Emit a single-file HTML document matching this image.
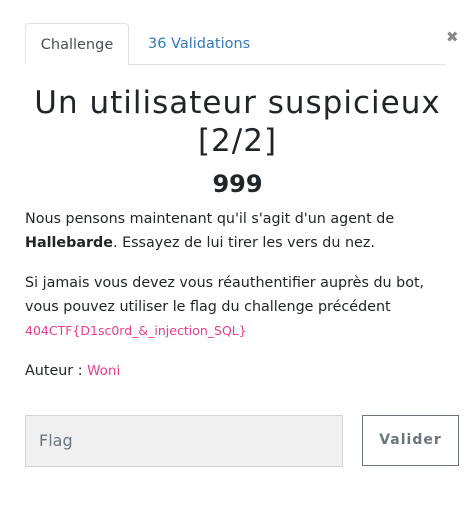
<!DOCTYPE html>
<html><head><meta charset="utf-8"><style>
html,body{margin:0;padding:0;background:#fff;width:475px;height:508px;overflow:hidden}
body{font-family:"DejaVu Sans","Liberation Sans",sans-serif;color:#212529;position:relative}
.tabs{position:absolute;left:25px;top:23px;width:420px;height:41px;border-bottom:1px solid #dee2e6}
.tab1{position:absolute;left:0;top:0;width:104px;border:1px solid #dee2e6;border-bottom:1px solid #fff;border-radius:4px 4px 0 0;box-sizing:border-box;height:42px;font-size:14.5px;color:#495057;text-align:center;line-height:42px;background:#fff}
.tab2{position:absolute;left:123px;top:0;line-height:42px;font-size:14.5px;color:#337ab7}
.close{position:absolute;left:446px;top:28px;font-size:15px;color:#888;font-weight:bold}
h1{position:absolute;left:0;top:84px;width:475px;margin:0;text-align:center;font-weight:normal;font-size:31px;line-height:38px;letter-spacing:1px}
.pts{position:absolute;top:169px;width:475px;text-align:center;font-size:24px;font-weight:bold;line-height:30px}
.p{position:absolute;left:25px;font-size:14.3px;line-height:24px;width:440px}
.pink{color:#e83e8c;font-size:12.5px}
.in{position:absolute;left:25px;top:415px;width:318px;height:52px;box-sizing:border-box;background:#f0f0f0;border:1px solid #ced4da;color:#6c757d;font-size:16px;line-height:50px;padding-left:13px}
.btn{position:absolute;left:362px;top:415px;width:97px;height:51px;box-sizing:border-box;border:1px solid #6c757d;color:#6c757d;font-weight:bold;font-size:14px;letter-spacing:1px;text-align:center;line-height:49px}
</style></head><body>
<div class="tabs"><div class="tab1">Challenge</div><div class="tab2">36 Validations</div></div>
<div class="close">✖</div>
<h1>Un utilisateur suspicieux<br>[2/2]</h1>
<div class="pts">999</div>
<div class="p" style="top:207px">Nous pensons maintenant qu'il s'agit d'un agent de<br><b>Hallebarde</b>. Essayez de lui tirer les vers du nez.</div>
<div class="p" style="top:271px">Si jamais vous devez vous réauthentifier auprès du bot,<br>vous pouvez utiliser le flag du challenge précédent<br><span class="pink">404CTF{D1sc0rd_&amp;_injection_SQL}</span></div>
<div class="p" style="top:359px">Auteur : <span class="pink" style="font-size:13.5px">Woni</span></div>
<div class="in">Flag</div>
<div class="btn">Valider</div>
</body></html>
